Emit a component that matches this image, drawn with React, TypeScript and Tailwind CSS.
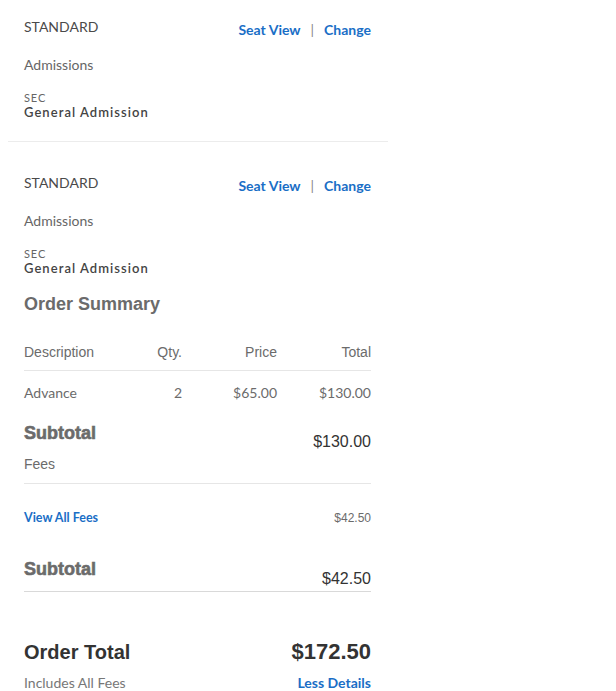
import React from 'react';

// Ticket / seat block shown above the order summary
function SeatBlock() {
  return (
    <div className="pl-4 pr-[17px]">
      <div className="flex justify-between items-start">
        <div className="mt-[1px] text-[14px] leading-[20px] text-[#4a4a4a]">STANDARD</div>
        <div className="mt-[4px] flex items-center gap-[10px] text-[14px] leading-[20px] font-bold text-[#1a6ec6]">
          <span>Seat View</span>
          <span className="font-normal text-[#888]">|</span>
          <span>Change</span>
        </div>
      </div>
      <div className="mt-[15px] text-[14px] leading-[20px] text-[#666]">Admissions</div>
      <div className="mt-[17px] text-[11px] leading-[12px] tracking-[0.08em] text-[#666]">SEC</div>
      <div className="text-[13px] leading-[16px] font-semibold tracking-[0.08em] text-[#444]">
        General Admission
      </div>
    </div>
  );
}

const rows = [{ desc: 'Advance', qty: 2, price: '$65.00', total: '$130.00' }];

export default function App() {
  return (
    <div className="w-[616px] h-[691px] bg-white overflow-hidden font-['Lato',sans-serif]">
      <div className="w-[380px] ml-2 pt-4">
        <SeatBlock />
        <div className="mt-[21px] h-px bg-[#ececec]" />
        <div className="pt-[30px]">
          <SeatBlock />
        </div>

        {/* Order summary */}
        <div className="pl-4 pr-[17px] font-['Liberation_Sans',Arial,sans-serif]">
          <h2 className="mt-[16px] text-[18px] leading-[24px] font-bold text-[#6b6b6b]">Order Summary</h2>

          <div className="mt-[26px] grid grid-cols-[98px_60px_95px_94px] text-[14px] leading-[20px] text-[#6b6b6b] pb-2 border-b border-[#e6e6e6]">
            <span>Description</span>
            <span className="text-right">Qty.</span>
            <span className="text-right">Price</span>
            <span className="text-right">Total</span>
          </div>
          {rows.map((r) => (
            <div
              key={r.desc}
              className="pt-[12px] grid grid-cols-[98px_60px_95px_94px] text-[14px] leading-[20px] text-[#6b6b6b] font-['Lato',sans-serif]"
            >
              <span>{r.desc}</span>
              <span className="text-right">{r.qty}</span>
              <span className="text-right">{r.price}</span>
              <span className="text-right">{r.total}</span>
            </div>
          ))}

          <div className="mt-[18px] flex justify-between items-start pb-[9px] border-b border-[#e6e6e6]">
            <div>
              <div className="text-[18px] leading-[24px] font-bold text-[#6b6b6b] [-webkit-text-stroke:0.6px_#6b6b6b]">Subtotal</div>
              <div className="mt-[9px] text-[14px] leading-[20px] text-[#6b6b6b]">Fees</div>
            </div>
            <div className="mt-[11px] text-[16px] leading-[20px] text-[#333]">$130.00</div>
          </div>

          <div className="mt-[26px] flex justify-between items-center">
            <span className="text-[12.5px] leading-[16px] font-bold text-[#1a6ec6] font-['Lato',sans-serif]">View All Fees</span>
            <span className="text-[12px] leading-[16px] text-[#6b6b6b]">$42.50</span>
          </div>

          <div className="mt-[31px] flex justify-between items-start pb-[2px] border-b border-[#d9d9d9]">
            <div className="text-[18px] leading-[24px] font-bold text-[#6b6b6b] [-webkit-text-stroke:0.6px_#6b6b6b]">Subtotal</div>
            <div className="mt-[12px] text-[16px] leading-[20px] text-[#333]">$42.50</div>
          </div>

          <div className="mt-[46px] flex justify-between items-center">
            <span className="text-[20px] leading-[28px] font-bold text-[#333]">Order Total</span>
            <span className="text-[22px] leading-[28px] font-bold text-[#333]">$172.50</span>
          </div>
          <div className="mt-[8px] flex justify-between items-center font-['Lato',sans-serif] text-[14px] leading-[18px]">
            <span className="text-[#777]">Includes All Fees</span>
            <span className="font-bold text-[#1a6ec6]">Less Details</span>
          </div>
        </div>
      </div>
    </div>
  );
}
